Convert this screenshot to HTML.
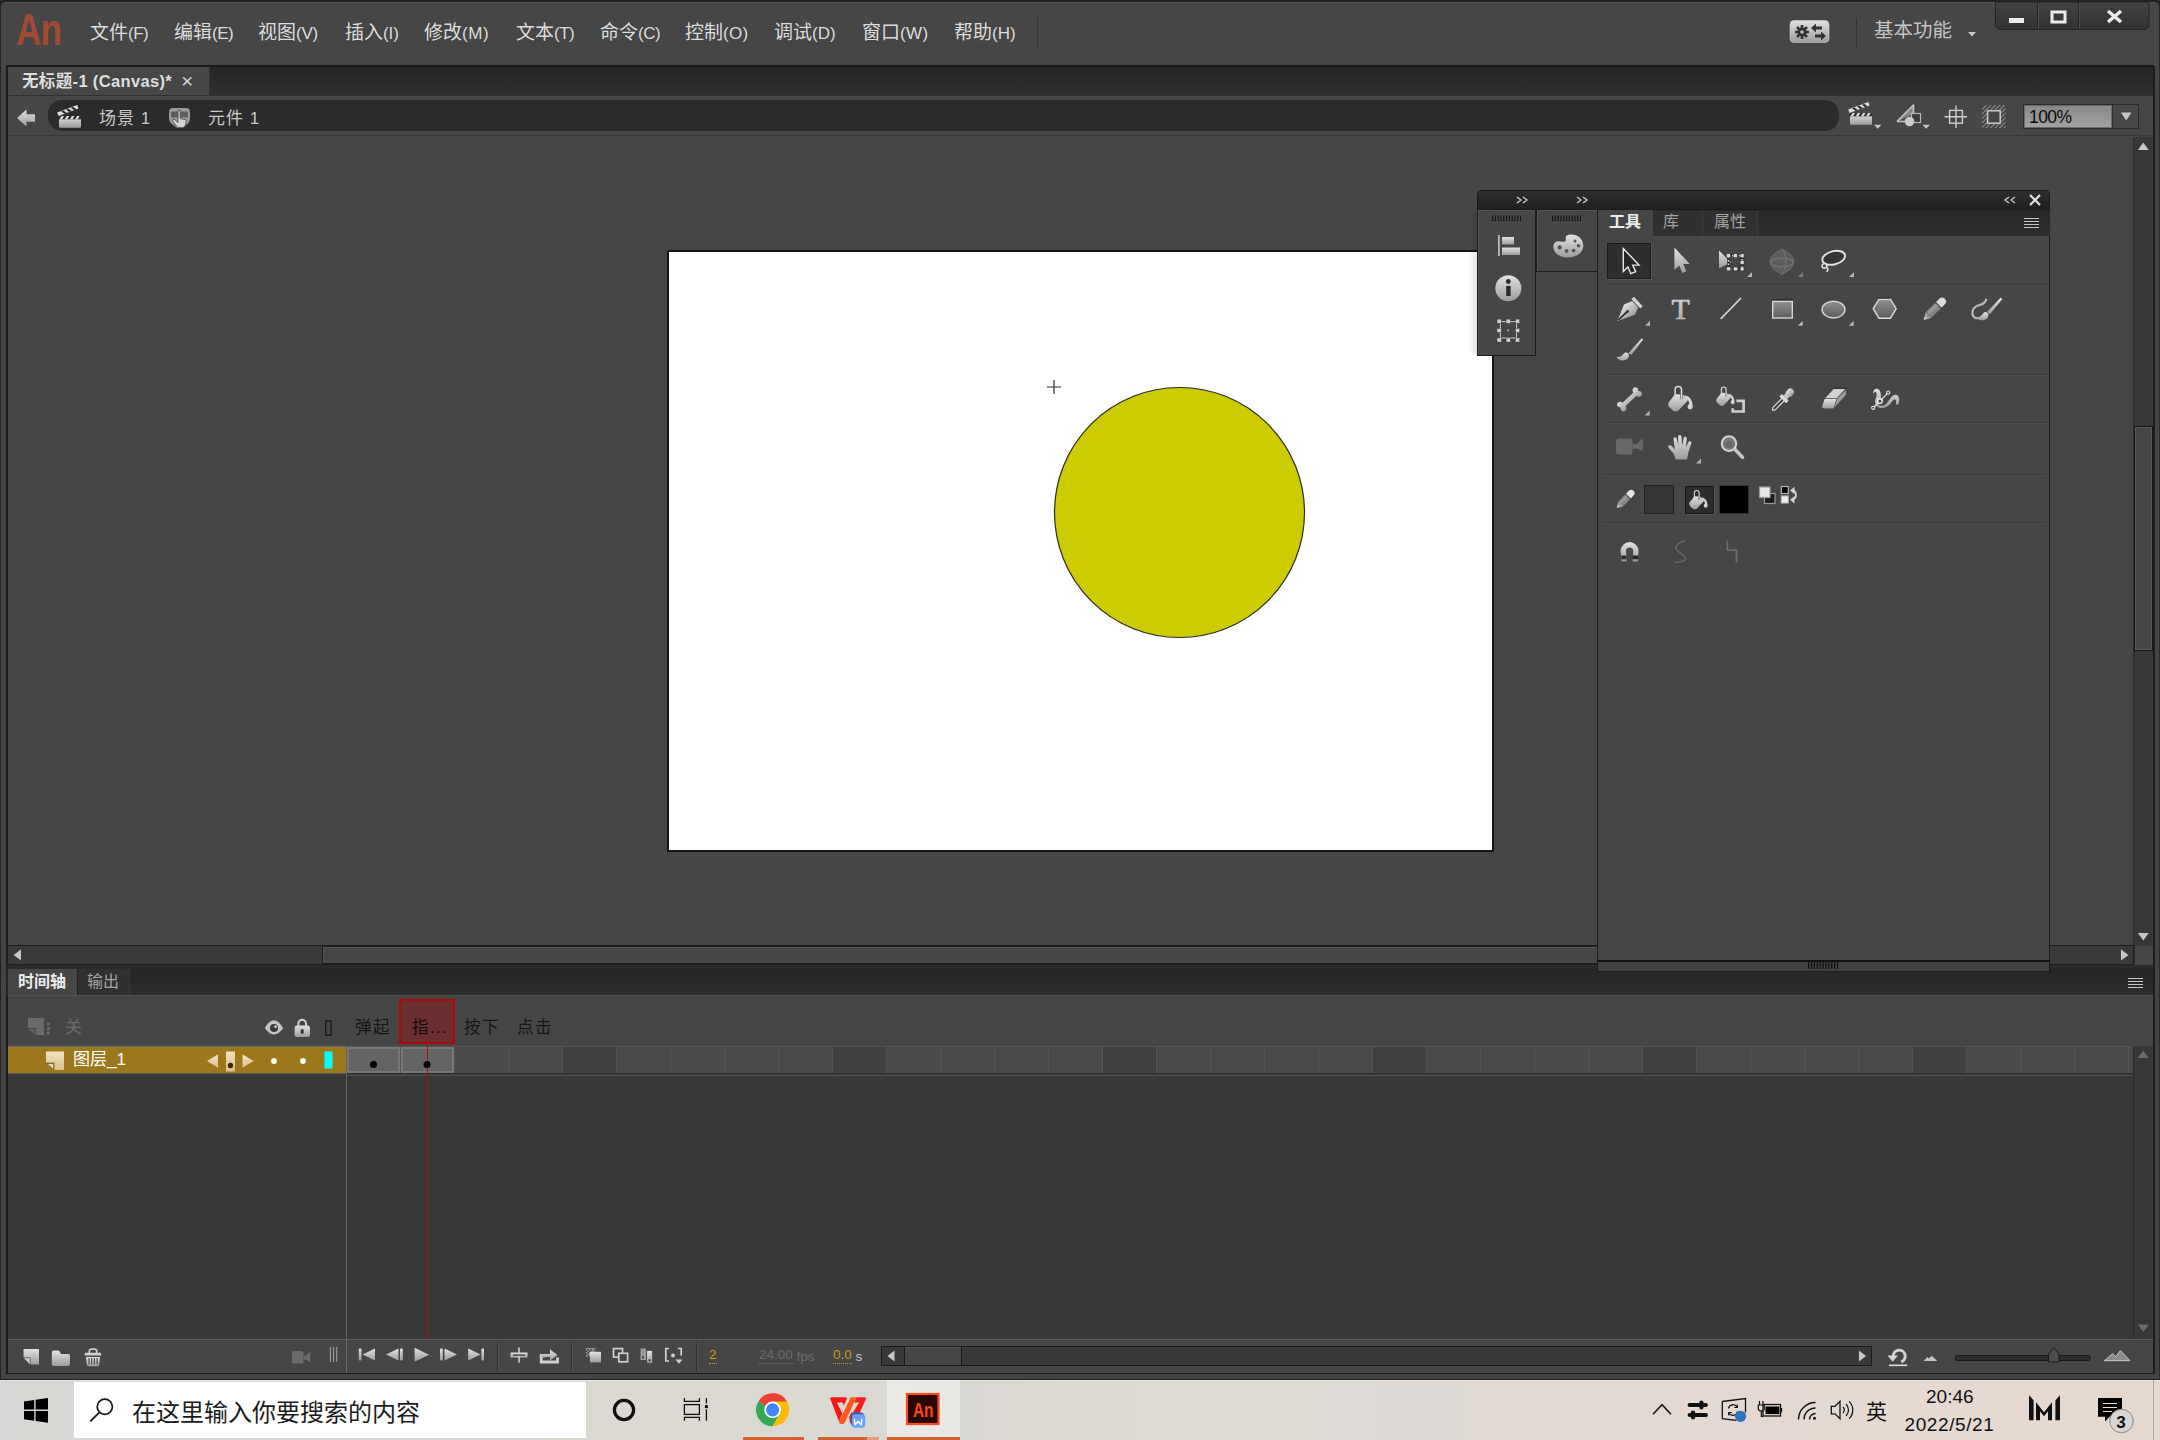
<!DOCTYPE html>
<html lang="zh-CN">
<head>
<meta charset="utf-8">
<title>Adobe Animate</title>
<style>
*{box-sizing:border-box;margin:0;padding:0}
html,body{width:2160px;height:1440px;overflow:hidden;background:#464646}
body{font-family:"Liberation Sans","Noto Sans CJK SC",sans-serif;color:#d6d6d6;position:relative}
.a{position:absolute}
.t{position:absolute;white-space:nowrap;line-height:1;z-index:5}
#ov{position:absolute;left:0;top:0;width:2160px;height:1440px;pointer-events:none}
.menu{font-size:19px;color:#dcdcdc;top:23px}
.menu small{font-size:17px;letter-spacing:-0.5px}
</style>
</head>
<body>
<!-- window frame -->
<div class="a" style="left:0;top:0;width:2160px;height:1380px;background:#434343;border-left:1px solid #222;border-right:1px solid #2a2a2a"></div>
<div class="a" style="left:0;top:0;width:2160px;height:67px;background:#222;border-radius:4px 4px 0 0"></div>
<div class="a" style="left:1px;top:2px;width:2158px;height:65px;background:#464646;border-radius:5px 5px 0 0;border-top:1px solid #565656"></div>
<!-- menu bar bottom line -->
<div class="a" style="left:6px;top:65px;width:2148px;height:2px;background:#1a1a1a"></div>
<!-- doc tab strip -->
<div class="a" style="left:7px;top:67px;width:2146px;height:28px;background:linear-gradient(#252525,#2f2f2f)"></div>
<div class="a" style="left:7px;top:67px;width:203px;height:29px;background:#474747;border-right:1px solid #333"></div>
<div class="a" style="left:7px;top:95px;width:2146px;height:1px;background:#303030"></div>
<!-- edit bar -->
<div class="a" style="left:7px;top:96px;width:2146px;height:39px;background:#464646"></div>
<div class="a" style="left:48px;top:100px;width:1791px;height:31px;background:#2b2b2b;border-radius:14px"></div>
<div class="a" style="left:7px;top:135px;width:2146px;height:1px;background:#383838"></div>
<!-- stage area -->
<div class="a" style="left:7px;top:136px;width:2127px;height:810px;background:#464646"></div>
<!-- left dark edge -->
<div class="a" style="left:6px;top:66px;width:2px;height:1309px;background:#1c1c1c"></div>
<div class="a" style="left:2153px;top:66px;width:2px;height:1309px;background:#1c1c1c"></div>
<!-- stage -->
<div class="a" style="left:667px;top:250px;width:827px;height:602px;background:#fff;border:2px solid #141414;border-radius:1px"></div>
<!-- stage v scrollbar -->
<div class="a" style="left:2133px;top:137px;width:20px;height:809px;background:#373737;border-left:1px solid #2a2a2a"></div>
<div class="a" style="left:2134px;top:426px;width:19px;height:225px;background:#464646;border:1px solid #161616;box-shadow:inset 0 0 0 1px #595959"></div>
<!-- stage h scrollbar -->
<div class="a" style="left:7px;top:945px;width:2127px;height:20px;background:#393939;border:1px solid #1e1e1e"></div>
<div class="a" style="left:322px;top:946px;width:1500px;height:18px;background:#464646;border:1px solid #1a1a1a;box-shadow:inset 0 1px 0 0 #5a5a5a, inset 1px 0 0 0 #555"></div>
<div class="a" style="left:2134px;top:946px;width:19px;height:19px;background:#464646;border-left:1px solid #2a2a2a"></div>
<!-- gap between stage and timeline -->
<div class="a" style="left:7px;top:965px;width:2146px;height:4px;background:#2a2a2a"></div>
<!-- timeline tab strip -->
<div class="a" style="left:7px;top:969px;width:2146px;height:26px;background:linear-gradient(#262626,#2d2d2d)"></div>
<div class="a" style="left:8px;top:969px;width:69px;height:27px;background:#464646"></div>
<div class="a" style="left:77px;top:969px;width:53px;height:26px;background:#303030;border-right:1px solid #3a3a3a;border-left:1px solid #222"></div>
<!-- timeline header -->
<div class="a" style="left:8px;top:995px;width:2145px;height:52px;background:#464646;border-top:1px solid #505050"></div>
<!-- timeline body -->
<div class="a" style="left:8px;top:1047px;width:2145px;height:293px;background:#383838"></div>
<!-- layer row -->
<div class="a" style="left:8px;top:1046px;width:338px;height:28px;background:#9c781c;border-top:1px solid #6a6a6a;border-bottom:1px solid #5a5a5a"></div>
<!-- frames row -->
<div class="a" id="frames" style="left:346px;top:1046px;width:1788px;height:28px;background:#555"></div>
<div class="a" style="left:347px;top:1047px;width:53px;height:26px;background:#646464;border:2px solid #777"></div>
<div class="a" style="left:401px;top:1047px;width:53px;height:26px;background:#646464;border:2px solid #777"></div>
<div class="a" style="left:455px;top:1047px;width:53px;height:26px;background:#4a4a4a"></div>
<div class="a" style="left:509px;top:1047px;width:53px;height:26px;background:#4a4a4a"></div>
<div class="a" style="left:563px;top:1047px;width:53px;height:26px;background:#404040"></div>
<div class="a" style="left:617px;top:1047px;width:53px;height:26px;background:#4a4a4a"></div>
<div class="a" style="left:671px;top:1047px;width:53px;height:26px;background:#4a4a4a"></div>
<div class="a" style="left:725px;top:1047px;width:53px;height:26px;background:#4a4a4a"></div>
<div class="a" style="left:779px;top:1047px;width:53px;height:26px;background:#4a4a4a"></div>
<div class="a" style="left:833px;top:1047px;width:53px;height:26px;background:#404040"></div>
<div class="a" style="left:887px;top:1047px;width:53px;height:26px;background:#4a4a4a"></div>
<div class="a" style="left:941px;top:1047px;width:53px;height:26px;background:#4a4a4a"></div>
<div class="a" style="left:995px;top:1047px;width:53px;height:26px;background:#4a4a4a"></div>
<div class="a" style="left:1049px;top:1047px;width:53px;height:26px;background:#4a4a4a"></div>
<div class="a" style="left:1103px;top:1047px;width:53px;height:26px;background:#404040"></div>
<div class="a" style="left:1157px;top:1047px;width:53px;height:26px;background:#4a4a4a"></div>
<div class="a" style="left:1211px;top:1047px;width:53px;height:26px;background:#4a4a4a"></div>
<div class="a" style="left:1265px;top:1047px;width:53px;height:26px;background:#4a4a4a"></div>
<div class="a" style="left:1319px;top:1047px;width:53px;height:26px;background:#4a4a4a"></div>
<div class="a" style="left:1373px;top:1047px;width:53px;height:26px;background:#404040"></div>
<div class="a" style="left:1427px;top:1047px;width:53px;height:26px;background:#4a4a4a"></div>
<div class="a" style="left:1481px;top:1047px;width:53px;height:26px;background:#4a4a4a"></div>
<div class="a" style="left:1535px;top:1047px;width:53px;height:26px;background:#4a4a4a"></div>
<div class="a" style="left:1589px;top:1047px;width:53px;height:26px;background:#4a4a4a"></div>
<div class="a" style="left:1643px;top:1047px;width:53px;height:26px;background:#404040"></div>
<div class="a" style="left:1697px;top:1047px;width:53px;height:26px;background:#4a4a4a"></div>
<div class="a" style="left:1751px;top:1047px;width:53px;height:26px;background:#4a4a4a"></div>
<div class="a" style="left:1805px;top:1047px;width:53px;height:26px;background:#4a4a4a"></div>
<div class="a" style="left:1859px;top:1047px;width:53px;height:26px;background:#4a4a4a"></div>
<div class="a" style="left:1913px;top:1047px;width:53px;height:26px;background:#404040"></div>
<div class="a" style="left:1967px;top:1047px;width:53px;height:26px;background:#4a4a4a"></div>
<div class="a" style="left:2021px;top:1047px;width:53px;height:26px;background:#4a4a4a"></div>
<div class="a" style="left:2075px;top:1047px;width:53px;height:26px;background:#4a4a4a"></div>
<div class="a" style="left:2129px;top:1047px;width:4px;height:26px;background:#4a4a4a"></div>
<div class="a" style="left:347px;top:1073px;width:1786px;height:1px;background:#2e2e2e"></div>
<div class="a" style="left:347px;top:1074px;width:1786px;height:1px;background:#3a3a3a"></div>
<div class="a" style="left:347px;top:1075px;width:1786px;height:1px;background:#505050"></div>
<!-- divider -->
<div class="a" style="left:346px;top:1047px;width:1px;height:326px;background:#686868;z-index:2"></div>
<!-- timeline v scroll -->
<div class="a" style="left:2133px;top:1046px;width:20px;height:294px;background:#373737;border-left:1px solid #2a2a2a"></div>
<!-- playhead -->
<div class="a" style="left:399px;top:999px;width:56px;height:45px;background:#6a3030;border:2px solid #b40808"></div>
<div class="a" style="left:427px;top:1044px;width:1px;height:295px;background:#b00c0c"></div>
<!-- bottom toolbar -->
<div class="a" style="left:8px;top:1339px;width:2145px;height:34px;background:#464646;border-top:1px solid #5c5c5c"></div>
<div class="a" style="left:0;top:1373px;width:2160px;height:7px;background:#444;border-bottom:1px solid #202020;border-left:1px solid #222;border-right:1px solid #2a2a2a"></div>
<div class="a" style="left:6px;top:1373px;width:2149px;height:1px;background:#181818"></div>
<!-- timeline h scroll -->
<div class="a" style="left:881px;top:1346px;width:991px;height:20px;background:#383838;border:1px solid #1a1a1a"></div>
<div class="a" style="left:904px;top:1346px;width:58px;height:20px;background:#464646;border:1px solid #1a1a1a;box-shadow:inset 0 1px 0 0 #5a5a5a"></div>
<!-- floating panel -->
<div class="a" style="left:1477px;top:190px;width:573px;height:20px;background:linear-gradient(#2e2e2e,#1f1f1f);border-radius:5px 5px 0 0;border:1px solid #1a1a1a;border-bottom:none"></div>
<div class="a" style="left:1469px;top:212px;width:8px;height:142px;background:linear-gradient(90deg,rgba(0,0,0,0),rgba(0,0,0,.1))"></div>
<!-- icon col 1 -->
<div class="a" style="left:1477px;top:209px;width:59px;height:147px;background:#464646;border:1px solid #1c1c1c;box-shadow:inset 1px 1px 0 0 #555"></div>
<!-- icon col 2 -->
<div class="a" style="left:1536px;top:209px;width:62px;height:63px;background:#464646;border:1px solid #1c1c1c;box-shadow:inset 1px 1px 0 0 #555"></div>
<!-- tool panel body -->
<div class="a" style="left:1597px;top:209px;width:453px;height:752px;background:#464646;border:1px solid #1c1c1c"></div>
<!-- tool panel tab strip -->
<div class="a" style="left:1598px;top:210px;width:452px;height:26px;background:linear-gradient(#282828,#2e2e2e)"></div>
<div class="a" style="left:1598px;top:210px;width:55px;height:27px;background:#464646"></div>
<div class="a" style="left:1653px;top:211px;width:50px;height:25px;background:#303030;border-right:1px solid #3c3c3c"></div>
<div class="a" style="left:1703px;top:211px;width:55px;height:25px;background:#303030;border-right:1px solid #3c3c3c"></div>
<!-- panel bottom grip -->
<div class="a" style="left:1597px;top:960px;width:453px;height:12px;background:#414141;border:1px solid #1c1c1c;border-top:2px solid #111"></div>
<!-- selected tool -->
<div class="a" style="left:1607px;top:243px;width:44px;height:36px;background:#2e2e2e;border:1px solid #1a1a1a;box-shadow:1px 1px 0 0 #585858"></div>
<!-- separators -->
<div class="a" style="left:1606px;top:284px;width:443px;height:2px;background:#3a3a3a;border-bottom:1px solid #505050"></div>
<div class="a" style="left:1606px;top:374px;width:443px;height:2px;background:#3a3a3a;border-bottom:1px solid #505050"></div>
<div class="a" style="left:1606px;top:422px;width:443px;height:2px;background:#3a3a3a;border-bottom:1px solid #505050"></div>
<div class="a" style="left:1603px;top:474px;width:443px;height:2px;background:#3a3a3a;border-bottom:1px solid #505050"></div>
<div class="a" style="left:1603px;top:522px;width:443px;height:2px;background:#3a3a3a;border-bottom:1px solid #505050"></div>
<!-- swatches -->
<div class="a" style="left:1644px;top:485px;width:30px;height:29px;background:#353535;border:1px solid #222"></div>
<div class="a" style="left:1685px;top:486px;width:29px;height:28px;background:#2c2c2c;border:1px solid #181818;box-shadow:1px 1px 0 0 #5a5a5a"></div>
<div class="a" style="left:1719px;top:485px;width:30px;height:29px;background:#000;border:1px solid #333"></div>
<!-- taskbar -->
<div class="a" style="left:0;top:1380px;width:2160px;height:60px;background:linear-gradient(90deg,#d7d7d5 0%,#dcd9d3 28%,#dad8d2 45%,#dddbd3 55%,#ded9d5 65%,#e3d9d3 76%,#e5d9d1 88%,#e5d8cf 100%)"></div>
<div class="a" style="left:0;top:1380px;width:2160px;height:1px;background:rgba(255,255,255,.35)"></div>
<div class="a" style="left:74px;top:1382px;width:512px;height:56px;background:#fff"></div>
<div class="a" style="left:887px;top:1380px;width:73px;height:60px;background:rgba(255,255,255,.45)"></div>
<div class="a" style="left:743px;top:1437px;width:61px;height:3px;background:#d0622e"></div>
<div class="a" style="left:818px;top:1437px;width:61px;height:3px;background:#d0622e"></div>
<div class="a" style="left:867px;top:1437px;width:12px;height:3px;background:#dfa080"></div>
<div class="a" style="left:887px;top:1437px;width:73px;height:3px;background:#d0622e"></div>
<div class="a" style="left:2153px;top:1380px;width:1px;height:60px;background:#a8a4a2"></div>
<!-- TEXT -->
<div class="t" id="logo" style="left:16px;top:8px;font-size:44px;font-weight:bold;color:#a04a32;letter-spacing:-1px;transform:scaleX(.8);transform-origin:0 0">An</div>
<div class="t menu" id="m1" style="left:90px">文件<small>(F)</small></div>
<div class="t menu" id="m2" style="left:174px">编辑<small>(E)</small></div>
<div class="t menu" id="m3" style="left:258px">视图<small style="letter-spacing:-0.30px">(V)</small></div>
<div class="t menu" id="m4" style="left:345px">插入<small style="letter-spacing:-0.08px">(I)</small></div>
<div class="t menu" id="m5" style="left:424px">修改<small style="letter-spacing:0.53px">(M)</small></div>
<div class="t menu" id="m6" style="left:516px">文本<small>(T)</small></div>
<div class="t menu" id="m7" style="left:600px">命令<small>(C)</small></div>
<div class="t menu" id="m8" style="left:685px">控制<small style="letter-spacing:0.27px">(O)</small></div>
<div class="t menu" id="m9" style="left:774px">调试<small style="letter-spacing:-0.03px">(D)</small></div>
<div class="t menu" id="m10" style="left:862px">窗口<small style="letter-spacing:0.33px">(W)</small></div>
<div class="t menu" id="m11" style="left:954px">帮助<small style="letter-spacing:-0.03px">(H)</small></div>
<div class="a" style="left:1037px;top:18px;width:1px;height:30px;background:#333"></div>
<div class="a" style="left:1856px;top:18px;width:1px;height:30px;background:#333"></div>
<div class="t" id="ws" style="left:1874px;top:21px;font-size:19.5px;color:#c4c4c4">基本功能</div>
<div class="t" id="doctab" style="left:22px;top:73px;font-size:16.5px;font-weight:bold;color:#dedede;letter-spacing:.35px">无标题-1 (Canvas)*</div>
<div class="t" id="tabx" style="left:181px;top:70px;font-size:21px;color:#d0d0d0">×</div>
<div class="t" id="sc1" style="left:99px;top:110px;font-size:17px;color:#c8c8c8;letter-spacing:1px">场景 1</div>
<div class="t" id="sc2" style="left:208px;top:110px;font-size:17px;color:#c8c8c8;letter-spacing:1px">元件 1</div>
<div class="t" id="zoom" style="left:2029px;top:108.5px;font-size:17.5px;color:#0c0c0c;letter-spacing:-0.6px">100%</div>
<!-- panel tabs -->
<div class="t" id="pt1" style="left:1609px;top:214px;font-size:16px;font-weight:bold;color:#ececec">工具</div>
<div class="t" id="pt2" style="left:1663px;top:214px;font-size:16px;color:#a4a4a4">库</div>
<div class="t" id="pt3" style="left:1714px;top:214px;font-size:16px;color:#a4a4a4">属性</div>
<!-- timeline tabs -->
<div class="t" id="tt1" style="left:18px;top:973.5px;font-size:16px;font-weight:bold;color:#ececec">时间轴</div>
<div class="t" id="tt2" style="left:87px;top:973.5px;font-size:16px;color:#a4a4a4">输出</div>
<div class="t" id="guan" style="left:65px;top:1019px;font-size:17px;color:#6c6c6c">关</div>
<div class="t" id="layer" style="left:73px;top:1051px;font-size:17px;color:#fff">图层_1</div>
<div class="t" id="h1" style="left:355px;top:1019px;font-size:16.5px;color:#151515;letter-spacing:1.5px">弹起</div>
<div class="t" id="h2" style="left:412px;top:1019px;font-size:16.5px;color:#180808;letter-spacing:1.5px">指...</div>
<div class="t" id="h3" style="left:464px;top:1019px;font-size:16.5px;color:#151515;letter-spacing:1.5px">按下</div>
<div class="t" id="h4" style="left:517px;top:1019px;font-size:16.5px;color:#151515;letter-spacing:1.5px">点击</div>
<!-- bottom toolbar text -->
<div class="t" id="b1" style="left:709px;top:1348px;font-size:13.5px;color:#c89a1e;border-bottom:1px dotted #c89a1e;padding-bottom:1px">2</div>
<div class="t" id="b2" style="left:759px;top:1348px;font-size:13.5px;color:#6a6a6a"><span style="border-bottom:1px dotted #6a6a6a;padding-bottom:1px">24.00</span> <span style="position:relative;top:1.5px">fps</span></div>
<div class="t" id="b3" style="left:833px;top:1348px;font-size:13.5px;color:#c8c8c8"><span style="color:#c89a1e;border-bottom:1px dotted #c89a1e;padding-bottom:1px">0.0</span> <span style="position:relative;top:1.5px">s</span></div>
<!-- taskbar text -->
<div class="t" id="search" style="left:132px;top:1400.5px;font-size:24px;color:#1c1c1c">在这里输入你要搜索的内容</div>
<div class="t" id="clk1" style="left:1926px;top:1387px;font-size:19px;color:#111">20:46</div>
<div class="t" id="clk2" style="left:1904.500px;top:1415px;font-size:19px;color:#111;letter-spacing:.6px">2022/5/21</div>
<div class="t" id="ime" style="left:1866px;top:1401px;font-size:21px;color:#111">英</div>
<svg id="ov" viewBox="0 0 2160 1440">
<defs>
<linearGradient id="g" x1="0" y1="0" x2="0" y2="1"><stop offset="0" stop-color="#e2e2e2"/><stop offset="1" stop-color="#9c9c9c"/></linearGradient>
<linearGradient id="gd" x1="0" y1="0" x2="0" y2="1"><stop offset="0" stop-color="#7c7c7c"/><stop offset="1" stop-color="#5c5c5c"/></linearGradient>
<linearGradient id="gy" x1="0" y1="0" x2="0" y2="1"><stop offset="0" stop-color="#f0e2c4"/><stop offset="1" stop-color="#d8c08c"/></linearGradient>
<linearGradient id="gb" x1="0" y1="0" x2="0" y2="1"><stop offset="0" stop-color="#424242"/><stop offset="1" stop-color="#323232"/></linearGradient>
<linearGradient id="gz" x1="0" y1="0" x2="0" y2="1"><stop offset="0" stop-color="#888"/><stop offset="1" stop-color="#a2a2a2"/></linearGradient>
</defs>
<!-- window buttons -->
<path d="M1995.5 2V24.5a5 5 0 0 0 5 5H2144a5 5 0 0 0 5-5V2z" fill="url(#gb)" stroke="#242424"/>
<path d="M2037.5 2V29.5M2078.5 2V29.5" stroke="#262626" stroke-width="1"/>
<path d="M2038.5 3V29M2079.5 3V29" stroke="#4a4a4a" stroke-width="1"/>
<rect x="2009" y="18" width="15" height="5" fill="#ececec"/>
<rect x="2052" y="12" width="13" height="10" fill="none" stroke="#ececec" stroke-width="3"/>
<path d="M2108 11L2121 22M2121 11L2108 22" stroke="#ececec" stroke-width="3.4"/>
<!-- sync icon -->
<rect x="1790" y="20.5" width="39" height="22" rx="4" fill="url(#g)" stroke="#d0d0d0" stroke-width="0.6"/>
<g fill="#333">
<circle cx="1802" cy="32" r="4.6"/>
<g stroke="#333" stroke-width="2.6"><path d="M1802 25v14M1795 32h14M1797 27l10 10M1807 27l-10 10"/></g>
<circle cx="1802" cy="32" r="1.8" fill="#b8b8b8"/>
<path d="M1811 28l5-4.5v3h6v3h-6v3z"/>
<path d="M1826 36l-5-4.5v3h-6v3h6v3z"/>
</g>
<path d="M1968 32h8l-4 4.5z" fill="#c8c8c8"/>
<!-- edit bar: back arrow -->
<path d="M17 118l9.5-8.5v4.7h8.5v7.6h-8.5v4.7z" fill="url(#g)"/>
<!-- clapper (left) -->
<g id="clap">
<rect x="59" y="116" width="22" height="11.8" rx="1.2" fill="url(#g)"/>
<rect x="59" y="116" width="22" height="3.3" fill="#2b2b2b"/>
<path d="M61.5 116l-2 3.3h2.6l2-3.3zM66.7 116l-2 3.3h2.6l2-3.3zM71.9 116l-2 3.3h2.6l2-3.3zM77.1 116l-2 3.3h2.6l2-3.3z" fill="#dcdcdc"/>
<g transform="rotate(-20.5 58.8 116.2)">
<rect x="58.6" y="112.2" width="21.4" height="3.8" fill="#e0e0e0"/>
<path d="M62.6 112.6l2.4 3.4h2.6l-2.4-3.4zM67.8 112.6l2.4 3.4h2.6l-2.4-3.4zM73 112.6l2.4 3.4h2.6l-2.4-3.4z" fill="#2b2b2b"/>
</g>
</g>
<!-- symbol (button) icon -->
<path d="M169 112q0-4 4-4h13q4 0 4 4v6q0 5-4 7l-3 3h-6l-5-4q-3-2-3-6z" fill="#9a9a9a"/>
<path d="M172 111.5h15q1 0 1 1v5h-17v-5q0-1 1-1z" fill="#5e5e5e"/>
<path d="M178 110.5h2.2v8l5 1.2q1.5.5 1 2.5l-1 3.5q-.5 1.8-2.5 1.8h-4q-1.5 0-2.5-1.5l-3.5-5q-.8-1.5 1-1.5 1.2 0 2 1l2.3 2z" fill="#d2d2d2" stroke="#333" stroke-width=".7"/>
<!-- edit bar right: clapper -->
<use href="#clap" x="1791" y="-3"/>
<path d="M1874 124.7h7.4l-3.7 4z" fill="#c8c8c8"/>
<!-- edit symbols icon -->
<path d="M1897 121.5L1913.5 105v8.5" fill="#888" stroke="#c4c4c4" stroke-width="1.6" stroke-linejoin="round"/>
<path d="M1897 121.5h10" stroke="#c4c4c4" stroke-width="1.6"/>
<rect x="1911.5" y="113.5" width="9" height="9" fill="#3c3c3c" stroke="#b8b8b8" stroke-width="1.2"/>
<circle cx="1909.5" cy="121.5" r="4.8" fill="#cacaca"/>
<path d="M1922.5 124.7h7.4l-3.7 4z" fill="#c8c8c8"/>
<!-- center stage -->
<g stroke="#cccccc" stroke-width="1.4" fill="none"><path d="M1956 105.5v22.5M1944.6 116.8h22.4"/><rect x="1949.6" y="110.4" width="12.8" height="12.8"/></g>
<!-- clip icon -->
<clipPath id="ring"><path clip-rule="evenodd" d="M1982 105h23.5v23h-23.5zM1987 110h13.5v13.5h-13.5z"/></clipPath>
<g clip-path="url(#ring)" stroke="#8c8c8c" stroke-width="1.1">
<path d="M1976 111l8-8M1976 115.5l12.5-12.5M1976 120l17-17M1976 124.5l21.5-21.5M1976 129l26-26M1980.5 129l26-26M1985 129l26-26M1989.5 129l22-22M1994 129l18-18M1998.5 129l13-13M2003 129l9-9M1976 133.5l30-30"/>
</g>
<rect x="1987.6" y="110.8" width="12.6" height="12.4" fill="none" stroke="#cccccc" stroke-width="1.5"/>
<!-- zoom combo -->
<rect x="2023.5" y="104.5" width="115" height="24" fill="#484848" stroke="#2a2a2a"/>
<rect x="2024.5" y="105.5" width="87" height="22" fill="url(#gz)" stroke="#6a6a6a"/>
<path d="M2112.5 105v23" stroke="#2e2e2e"/>
<path d="M2121 112.5h10.5l-5.25 8z" fill="#c8c8c8"/>
</svg>
<svg id="ov2" style="position:absolute;left:0;top:0;width:2160px;height:1440px" viewBox="0 0 2160 1440">
<defs>
<path id="sub" d="M0 0v-5l-5 5z" fill="#b4b4b4"/>
<linearGradient id="gs" x1="0" y1="0" x2="0" y2="1"><stop offset="0" stop-color="#909090"/><stop offset="1" stop-color="#5c5c5c"/></linearGradient>
</defs>
<!-- panel title bar glyphs -->
<g stroke="#d0d0d0" stroke-width="1.3" fill="none">
<path d="M1517 197l4 3-4 3M1523 197l4 3-4 3"/>
<path d="M1577 197l4 3-4 3M1583 197l4 3-4 3"/>
<path d="M2009 197l-4 3 4 3M2015 197l-4 3 4 3"/>
</g>
<path d="M2030 195l10 10M2040 195l-10 10" stroke="#e4e4e4" stroke-width="2.2"/>
<!-- panel menu icon -->
<path d="M2024 218.5h15M2024 221.5h15M2024 224.5h15M2024 227.5h15" stroke="#c4c4c4" stroke-width="1.2"/>
<!-- grips -->
<path d="M1492 218.5h29M1552 218.5h29" stroke="#161616" stroke-width="6" stroke-dasharray="1.2 1.6"/>
<path d="M1492 222.5h29M1552 222.5h29" stroke="#5a5a5a" stroke-width="1" stroke-dasharray="1.2 1.6"/>
<path d="M1808 965.5h30" stroke="#101010" stroke-width="7" stroke-dasharray="1.2 1.7"/>
<!-- align icon -->
<rect x="1498" y="235" width="1.8" height="21" fill="#b8b8b8"/>
<rect x="1502" y="237" width="12" height="7.5" fill="url(#g)"/>
<rect x="1502" y="247.5" width="18" height="7.5" fill="url(#g)"/>
<!-- info icon -->
<circle cx="1508.3" cy="288.3" r="13" fill="url(#g)"/>
<circle cx="1508.3" cy="281.5" r="2.4" fill="#2a2a2a"/>
<rect x="1506.2" y="286" width="4.4" height="10" fill="#2a2a2a"/>
<!-- transform icon -->
<rect x="1500.4" y="321.6" width="16.1" height="16.4" fill="none" stroke="#2c2c2c" stroke-width="2.6"/>
<rect x="1500.4" y="321.6" width="16.1" height="16.4" fill="none" stroke="#c6c6c6" stroke-width="1.3"/>
<g fill="#d0d0d0" stroke="#3a3a3a" stroke-width=".5">
<rect x="1497" y="319.1" width="4.4" height="4.2"/>
<rect x="1497" y="328.3" width="4.4" height="4.2"/>
<rect x="1497" y="337.9" width="4.4" height="4.2"/>
<rect x="1506.1" y="319.1" width="4.4" height="4.2"/>
<rect x="1506.1" y="337.9" width="4.4" height="4.2"/>
<rect x="1515.3" y="319.1" width="4.4" height="4.2"/>
<rect x="1515.3" y="328.3" width="4.4" height="4.2"/>
<rect x="1515.3" y="337.9" width="4.4" height="4.2"/>
</g>
<rect x="1507.5" y="329.6" width="1.5" height="1.5" fill="#d8d8d8"/>
<!-- palette icon -->
<path d="M1553.4 246.7C1553.4 243.5 1555.5 241.3 1558.5 241.3C1561 241.3 1563 242.5 1565 241.3C1566.8 240 1565 238 1566 236.3C1567 234.8 1569 234.4 1571 234.4C1578 234.4 1583.3 239 1583.3 245.4C1583.3 252.5 1576.5 257.5 1567.7 257.5C1559.5 257.5 1553.4 253 1553.4 246.7Z" fill="url(#g)"/>
<g fill="#555"><circle cx="1559.7" cy="247.4" r="2.1"/><circle cx="1566.6" cy="250.9" r="1.9"/><circle cx="1573.6" cy="250.6" r="1.9"/><circle cx="1578.5" cy="245.8" r="1.8"/><circle cx="1575" cy="241" r="1.5"/></g>
<!-- ROW 1 -->
<path d="M1623.3 248.5v23l4.6-4.6 3 6.8 4.8-2-3-6.6h6.3z" fill="#262626" stroke="#e6e6e6" stroke-width="1.4" stroke-linejoin="miter"/>
<path d="M1674.4 247.6v22.5l4.8-4.6 3.2 7.5 4-1.7-3.2-7.4h6.6z" fill="url(#g)"/>
<path d="M1719 250.5v17.7l12.2-5.6z" fill="url(#g)"/>
<rect x="1728.5" y="255.7" width="13.6" height="13.2" fill="none" stroke="#222" stroke-width="2.6"/>
<rect x="1728.5" y="255.7" width="13.6" height="13.2" fill="none" stroke="#dcdcdc" stroke-width="1.5" stroke-dasharray="1.7 1.7"/>
<g fill="#dedede" stroke="#2a2a2a" stroke-width=".5">
<rect x="1726.6" y="253.8" width="3.8" height="3.8"/><rect x="1733.4" y="253.8" width="3.8" height="3.8"/><rect x="1740.2" y="253.8" width="3.8" height="3.8"/>
<rect x="1740.2" y="260.4" width="3.8" height="3.8"/>
<rect x="1726.6" y="267" width="3.8" height="3.8"/><rect x="1733.4" y="267" width="3.8" height="3.8"/><rect x="1740.2" y="267" width="3.8" height="3.8"/>
</g>
<use href="#sub" x="1752" y="277"/>
<!-- 3d rotation (disabled) -->
<g fill="none" stroke="#707070" stroke-width="1.4">
<path d="M1782 249.3c5 2.4 11.6 6.5 11.6 12.5s-6.6 10-11.6 12.5c-5-2.5-11.6-6.5-11.6-12.5s6.6-10.1 11.6-12.5z" fill="#5c5c5c" stroke="#666"/>
<ellipse cx="1782" cy="262.5" rx="11.4" ry="4.2"/>
<path d="M1782 249.5c5 4 5 21 0 24.6"/>
</g>
<use href="#sub" x="1803" y="277" opacity=".5"/>
<!-- lasso -->
<ellipse cx="1833.7" cy="257.8" rx="11.6" ry="6.6" transform="rotate(-14 1833.7 257.8)" fill="#363636" stroke="#e2e2e2" stroke-width="1.9"/>
<path d="M1824 263.5c-2.5 1-2.8 4.2 0 4.6 2.4.3 3.6-2 2.4-3.6M1826 266.5c2 1.5 3 3.6.5 5.5" fill="none" stroke="#e2e2e2" stroke-width="1.5"/>
<use href="#sub" x="1854" y="277"/>
<!-- ROW 2 -->
<!-- pen -->
<g transform="translate(1617.3 320.9) rotate(-42.8)">
<path d="M0 0L16 -7.4L24.4 -4.4V4.4L17 7.5Z" fill="url(#g)"/>
<path d="M1.5 0H13.5" stroke="#333" stroke-width="1.8"/>
<circle cx="14" cy="0" r="1.4" fill="#333"/>
<rect x="25.3" y="-6.5" width="3.3" height="13" fill="#d4d4d4"/>
</g>
<use href="#sub" x="1650" y="325.8"/>
<text x="1671.4" y="318.7" font-family="Liberation Serif, serif" font-size="29.6" fill="url(#g)" stroke="#c6c6c6" stroke-width=".7" textLength="18.2" lengthAdjust="spacingAndGlyphs">T</text>
<path d="M1720.7 318.8L1741 298" stroke="#d4d4d4" stroke-width="1.7"/>
<rect x="1772.7" y="301.4" width="19.6" height="16.6" fill="url(#gs)" stroke="#d6d6d6" stroke-width="1.4"/>
<path d="M1772 299.7h21" stroke="#2c2c2c" stroke-width="1.2"/>
<use href="#sub" x="1802.7" y="325.8"/>
<ellipse cx="1833.5" cy="309.6" rx="11.5" ry="8.4" fill="url(#gs)" stroke="#d6d6d6" stroke-width="1.4"/>
<use href="#sub" x="1853.7" y="325.8"/>
<path d="M1873.2 308.7l5.8-9.4h11.4l5.8 9.4-5.8 9.5h-11.4z" fill="url(#gs)" stroke="#d8d8d8" stroke-width="1.4"/>
<path d="M1878.5 298h12" stroke="#2c2c2c" stroke-width="1.2"/>
<!-- pencil -->
<g transform="translate(1923.6 319.9) rotate(-44.8)">
<path d="M0 0l7-3.8v7.6z" fill="#d0d0d0"/>
<path d="M3.8-2l3.2-1.8v7.6l-3.2-1.8z" fill="#9a9a9a"/>
<rect x="7.6" y="-3.9" width="12.6" height="7.8" fill="#888"/>
<path d="M7.6-1.4h12.6" stroke="#9c9c9c" stroke-width="2.4"/>
<path d="M21.4-3.9h4.6a3.9 3.9 0 0 1 0 7.8h-4.6z" fill="#dcdcdc"/>
</g>
<!-- art brush -->
<path d="M1986.5 298.8c-1 4-3 5.2-6.5 6-5 1.2-8 4.5-7.6 8.5.3 3 2 4.6 4.5 5" fill="none" stroke="#b8b8b8" stroke-width="2.3"/>
<path d="M2000.6 297.5l1.8 1.5-12.5 15.2-2.8-2.3z" fill="url(#g)"/>
<path d="M1975 317c4 .5 6.5-.8 8-3.6 1.2-1.3 2.8-1.8 4.2-.6 1.5 1.3 1.6 3 .6 4.6-2.2 3.4-8.3 4.4-12.8-.4z" fill="url(#g)"/>
<!-- brush (row 2b) -->
<path d="M1641.8 338.3l1.4 1.1-12 15.7-2.6-2z" fill="url(#g)"/>
<path d="M1616.2 357c3.5.3 5.8-.6 7.2-3 1.1-1.6 2.8-2.1 4.3-1 1.5 1.2 1.7 3 .8 4.6-2.2 3.9-8.5 4.3-12.3-.6z" fill="url(#g)"/>
<!-- ROW 3 -->
<!-- bone -->
<g transform="translate(1629.5 399.3) rotate(-43)">
<path d="M-7.5-2.2h15c0-3.8 5.2-4.4 5.9-1 .2 1.3-.4 2.4-1.4 3.2 1 .8 1.6 1.9 1.4 3.2-.7 3.4-5.9 2.8-5.9-1h-15c0 3.8-5.2 4.4-5.9 1-.2-1.3.4-2.4 1.4-3.2-1-.8-1.6-1.9-1.4-3.2.7-3.4 5.9-2.8 5.9 1z" fill="url(#g)"/>
</g>
<use href="#sub" x="1649.7" y="415.4"/>
<!-- paint bucket -->
<g id="bucket">
<path d="M1684 395.3C1688 395.5 1691.5 398.5 1692.3 403C1692.8 405.5 1692.9 407.3 1692.3 408.3C1691.3 410 1688.3 409.6 1687.7 407.5C1687.3 406 1688.3 404.5 1689.3 403.8C1689 401.5 1688.3 400.5 1687 399.6Z" fill="#d4d4d4"/>
<path d="M1674 395.6L1668.6 402.4Q1667.6 404.4 1669.2 407L1673.2 410.8Q1675.8 412.4 1678.4 410.6L1687.8 400.8L1686.4 398L1682.4 394.4L1675 394.2Z" fill="url(#g)"/>
<path d="M1681.5 394v5.2" stroke="#555" stroke-width="2.8"/>
<path d="M1675.1 396.8v-7.2a3.2 3.2 0 0 1 6.4 0v9.7" fill="none" stroke="#dedede" stroke-width="1.5"/>
</g>
<!-- ink bottle -->
<g transform="translate(465 97.2) scale(.75)"><use href="#bucket"/></g>
<path d="M1736.4 400.8H1743.6V411.5H1732.7V408.2" fill="none" stroke="#cdcdcd" stroke-width="2.7"/>
<!-- eyedropper -->
<g transform="translate(1772.6 410.2) rotate(-45.5)">
<path d="M0 0l2-1.6h13.5v3.2h-13.5z" fill="#3a3a3a" stroke="#d2d2d2" stroke-width="1.3"/>
<rect x="14.5" y="-4.8" width="3.6" height="9.6" rx=".8" fill="#dadada"/>
<rect x="18.1" y="-2.6" width="3.6" height="5.2" fill="#cacaca"/>
<rect x="20.5" y="-3.6" width="8.4" height="7.2" rx="3.4" fill="url(#g)"/>
</g>
<!-- eraser -->
<path d="M1834 388.8h11.4l-8.8 9.5h-11.6z" fill="#d2d2d2"/>
<path d="M1824.6 399h11.8l-2.8 9.5h-9.2q-2.6-.3-2.2-2.4z" fill="url(#g)"/>
<path d="M1837.2 398.6l8.8-8.6-.2 5-11.4 12.4z" fill="#9c9c9c"/>
<path d="M1833.5 388.3h12" stroke="#222" stroke-width="1"/>
<!-- width tool -->
<path d="M1873.4 393.6c-.6-3 1.3-5 3.6-4.8 2.6.3 3.8 3.3 4 6.6.2 3.2-1.8 5.3-3.4 8.3 1.6 2.2 4.8 2.6 7.2 1.2 3.4-2 4.8-6.5 8-9.2 2.3-1.7 5-1.4 6 1.5.8 2.3.5 4.7-.4 7.2h-2.4c.3-2.6.3-4.6-1.2-5-1.6-.3-3 2.6-5.4 5.4-2.6 2.8-7.4 4.3-11.2 2.4-3.6-1.8-3.8-6.4-2.2-9.8 1-2.2.8-4.8-.4-5.6-1-.4-1.6.4-1.4 1.8z" fill="url(#g)"/>
<path d="M1873.3 407.8l6.6-6.7 8.3-8.5" stroke="#ececec" stroke-width="1.3"/>
<circle cx="1879.9" cy="401.1" r="2.3" fill="#444" stroke="#f2f2f2" stroke-width="1.5"/>
<circle cx="1873.2" cy="407.8" r="1.6" fill="#444" stroke="#ececec" stroke-width="1.1"/>
<circle cx="1888.2" cy="392.6" r="1.6" fill="#444" stroke="#ececec" stroke-width="1.1"/>
<!-- ROW 4 -->
<rect x="1616" y="438.5" width="16.5" height="16" rx="2.5" fill="#686868"/>
<path d="M1632.5 443.6l3.5 1 6.9-6.4v12.6l-6.9-2.3-3.5.6z" fill="#686868"/>
<!-- hand -->
<path d="M1675.5 459.5l-1.6-5.6-5.6-6.4q-.8-1.8 1-2.3 1.5-.2 2.7 1.1l2.9 3.3-1.5-10.6q0-1.7 1.5-1.8 1.5 0 1.9 1.6l1.5 7.3-.2-9.6q.1-1.6 1.7-1.6t1.7 1.6l.6 9.5 1.5-8q.4-1.5 1.8-1.3 1.5.3 1.4 1.9l-.8 8.7 2.5-5.3q.7-1.3 2-.8 1.3.6.9 2.1l-3.1 9.3-1.3 6.9z" fill="url(#g)"/>
<use href="#sub" x="1701" y="463.4"/>
<!-- magnifier -->
<path d="M1735 449.5l7.5 7.7" stroke="#c4c4c4" stroke-width="3.6" stroke-linecap="round"/>
<circle cx="1729" cy="443.6" r="7.3" fill="#7a7a7a" stroke="#d4d4d4" stroke-width="2"/>
<ellipse cx="1729" cy="444.5" rx="4.5" ry="3.6" fill="#6a6a6a"/>
<!-- ROW 5 -->
<g transform="translate(1616.7 508) rotate(-45.7) scale(.86)">
<path d="M0 0l7-3.8v7.6z" fill="#d0d0d0"/>
<path d="M3.8-2l3.2-1.8v7.6l-3.2-1.8z" fill="#9a9a9a"/>
<rect x="7.6" y="-3.9" width="10.6" height="7.8" fill="#888"/>
<path d="M7.6-1.4h10.6" stroke="#9c9c9c" stroke-width="2.4"/>
<path d="M19.4-3.9h4.6a3.9 3.9 0 0 1 0 7.8h-4.6z" fill="#e4e4e4"/>
</g>
<g transform="translate(438 200.7) scale(.75)"><use href="#bucket"/></g>
<!-- default colors -->
<rect x="1764.5" y="493.5" width="10.5" height="10" fill="#1c1c1c" stroke="#9a9a9a" stroke-width="1.2"/>
<rect x="1759.5" y="487" width="10.5" height="10.5" fill="#e6e6e6" stroke="#9a9a9a" stroke-width="1.2"/>
<!-- swap colors -->
<rect x="1781.3" y="486.5" width="7" height="7" fill="#050505" stroke="#b4b4b4" stroke-width="1.2"/>
<rect x="1781.3" y="496" width="7" height="7" fill="#f2f2f2" stroke="#b4b4b4" stroke-width="1.2"/>
<path d="M1792 490.5c5 0 5.5 8.5 0 9" fill="none" stroke="#d0d0d0" stroke-width="1.8"/>
<path d="M1790 490.5l4.5-3.8v7.6zM1790 499.7l4.5-3.8v7.6z" fill="#d0d0d0"/>
<!-- ROW 6 -->
<path d="M1621.7 561.5L1620.6 551A9 9 0 0 1 1638.6 551L1637.8 561.5L1632.8 561.5L1633.2 551A3.6 3.6 0 0 0 1626 551L1626.7 561.5Z" fill="url(#g)"/>
<path d="M1621.1 555.4h5.2l.2 3.9h-5zM1633 555.4h5.2l-.3 3.9h-5z" fill="#2a2a2a"/>
<path d="M1685 541c-7 1.5-10.5 5-8.5 8.5s10 6 9 9.5c-1 2.5-6 3.3-11 3.5" fill="none" stroke="#6a6a6a" stroke-width="1.5"/>
<path d="M1727.3 540.4v9.8h9.2v12.6" fill="none" stroke="#6a6a6a" stroke-width="1.8"/>
</svg>
<svg id="ov3" style="position:absolute;left:0;top:0;width:2160px;height:1440px" viewBox="0 0 2160 1440">
<!-- stage scroll arrows -->
<path d="M2143.3 142.5l5.4 7.5h-10.8z" fill="#c8c8c8"/>
<path d="M2143.3 940.5l5.4-7.5h-10.8z" fill="#c8c8c8"/>
<path d="M13.5 955l7.5-5.4v10.8z" fill="#c8c8c8"/>
<path d="M2128.5 955l-7.5-5.4v10.8z" fill="#c8c8c8"/>
<!-- timeline v scroll arrows -->
<path d="M2143.3 1050.5l5.4 7.5h-10.8z" fill="#6c6c6c"/>
<path d="M2143.3 1332l5.4-7.5h-10.8z" fill="#6c6c6c"/>
<!-- timeline menu -->
<path d="M2128 978.5h15M2128 981.5h15M2128 984.5h15M2128 987.5h15" stroke="#c4c4c4" stroke-width="1.2"/>
<!-- stage content -->
<circle cx="1179.5" cy="512.5" r="125" fill="#cccc00" stroke="#2a2a2a" stroke-width="1.2"/>
<path d="M1054 380v14M1047 387h14" stroke="#2a2a2a" stroke-width="1.2"/>
<!-- timeline header icons -->
<path d="M28 1018h16v17h-8v-7h-8z" fill="#6a6a6a"/>
<path d="M28.5 1029h6.5v6z" fill="#606060"/>
<g fill="#686868"><rect x="47" y="1022.5" width="3" height="3"/><rect x="47" y="1027" width="3" height="3"/><rect x="47" y="1031.5" width="3" height="3"/></g>
<!-- eye -->
<path d="M264.8 1028q9.2-15.4 18.3.3-9.1 12.6-18.3-.3z" fill="#c4c4c4"/>
<circle cx="274" cy="1028.1" r="4" fill="#383838"/>
<circle cx="275.5" cy="1026.7" r="1.4" fill="#c8c8c8"/>
<!-- lock -->
<path d="M298.4 1026.5v-3a3.8 3.8 0 0 1 7.6 0v3" fill="none" stroke="#d4d4d4" stroke-width="1.9"/>
<rect x="294.6" y="1025.4" width="15.4" height="11.6" rx="2.5" fill="url(#g)"/>
<rect x="300.8" y="1029.2" width="2.8" height="4.6" rx=".8" fill="#2e2e2e"/>
<!-- outline box -->
<rect x="325.7" y="1021" width="5.4" height="14.2" fill="none" stroke="#161616" stroke-width="1.3"/>
<!-- layer row icons -->
<path d="M46 1051.5h18v18.5h-9.5v-7.5h-8.5z" fill="url(#gy)"/>
<path d="M46.8 1063.5h6.8v6.3z" fill="#e8d8b4" stroke="#5a4614" stroke-width=".6"/>
<path d="M207 1061l11-6.8v13.6z" fill="url(#gy)"/>
<path d="M253.5 1061l-11-6.8v13.6z" fill="url(#gy)"/>
<rect x="226" y="1051.5" width="9" height="20" fill="url(#gy)"/>
<circle cx="230.5" cy="1065.5" r="2.7" fill="#3a2a10"/>
<circle cx="274" cy="1061" r="2.9" fill="#fff"/>
<circle cx="303" cy="1061" r="2.9" fill="#fff"/>
<rect x="324.5" y="1051.5" width="8" height="17" fill="#00ffff"/>
<!-- keyframes -->
<circle cx="373.5" cy="1064.5" r="3.5" fill="#000"/>
<circle cx="427" cy="1064.5" r="3.5" fill="#000"/>
<!-- bottom toolbar left -->
<path d="M23.5 1349h15.5v15.5h-8.5v-7h-7z" fill="url(#g)"/>
<path d="M24 1358.3h5.8v6z" fill="#d0d0d0"/>
<path d="M51.8 1352.6q0-2 2-2h3.8q1.4 0 2.2 1.2l1.2 2.2h7q2 0 2 2v8q0 2-2 2h-14.2q-2 0-2-2z" fill="url(#g)"/>
<g>
<path d="M89.3 1353v-1.5q0-2.3 2.3-2.3h2.8q2.3 0 2.3 2.3v1.5" fill="none" stroke="#cfcfcf" stroke-width="1.7"/>
<rect x="84.6" y="1352.8" width="16.6" height="2.8" rx="1.2" fill="#d2d2d2"/>
<path d="M86 1357h14l-.8 7.6q-.2 1.6-1.8 1.6h-8.8q-1.6 0-1.8-1.6z" fill="url(#g)"/>
<path d="M89 1358v6.6M91.7 1358v6.6M94.4 1358v6.6M97.1 1358v6.6" stroke="#464646" stroke-width="1.1"/>
</g>
<!-- camera disabled -->
<rect x="292" y="1351" width="11.5" height="12.5" rx="1.8" fill="#6a6a6a"/>
<path d="M303.5 1355l2.3.8 4.4-4.2v10.8l-4.4-3-2.3.6z" fill="#6a6a6a"/>
<path d="M330.5 1347v15M333.6 1347v15M336.7 1347v15" stroke="#9c9c9c" stroke-width="1.1"/>
<!-- playback -->
<g fill="url(#g)">
<rect x="358.8" y="1348.6" width="2.6" height="11.8"/><path d="M362.6 1354.5l12.4-6v12z"/>
<path d="M386 1354.5l12.5-6v12z"/><rect x="400" y="1348.6" width="2.8" height="11.8"/>
<path d="M414.6 1347.7l14.4 7-14.4 7z"/>
<rect x="440" y="1348.6" width="2.8" height="11.8"/><path d="M457 1354.5l-12.5-6v12z"/>
<path d="M480.6 1354.5l-12.4-6v12z"/><rect x="481.4" y="1348.6" width="2.6" height="11.8"/>
</g>
<path d="M497.5 1342v29M571.5 1342v29M696.5 1342v29" stroke="#303030"/>
<path d="M498.5 1342v29M572.5 1342v29M697.5 1342v29" stroke="#525252"/>
<!-- center frame -->
<rect x="510.5" y="1352.5" width="17" height="5.2" fill="url(#g)"/>
<path d="M519 1347.5v15" stroke="#d4d4d4" stroke-width="1.5"/>
<path d="M513 1355.1h12" stroke="#464646" stroke-width="1.4"/>
<!-- loop -->
<path d="M541.2 1354v8h16.3v-4.5" fill="none" stroke="#d0d0d0" stroke-width="2.8"/>
<path d="M541 1357.5v-3.5h9v-4.5l7.5 5.5-7.5 5.5v-3.5h-5v.5z" fill="url(#g)"/>
<!-- onion skin -->
<rect x="590" y="1351.8" width="11" height="10.6" fill="url(#g)"/>
<path d="M586 1348h9.5v3.8h-5.5v5h-4z" fill="#9a9a9a"/>
<g fill="#3c3c3c"><rect x="587.5" y="1349" width="1.5" height="1.5"/><rect x="590.5" y="1349" width="1.5" height="1.5"/><rect x="593.5" y="1349" width="1.5" height="1.5"/><rect x="586" y="1350.5" width="1.5" height="1.5"/><rect x="589" y="1350.5" width="1.5" height="1.5"/><rect x="587.5" y="1352" width="1.5" height="1.5"/><rect x="586" y="1353.5" width="1.5" height="1.5"/><rect x="587.5" y="1355" width="1.5" height="1.5"/></g>
<!-- onion outlines -->
<rect x="613.5" y="1348.6" width="9" height="8.5" fill="none" stroke="#d0d0d0" stroke-width="1.7"/>
<rect x="618.8" y="1353.3" width="8.8" height="8.5" fill="#464646" stroke="#d0d0d0" stroke-width="1.7"/>
<!-- edit multiple frames -->
<rect x="640.5" y="1348.5" width="5.5" height="11.5" fill="#9a9a9a"/>
<rect x="646.5" y="1350.6" width="6" height="12.6" fill="url(#g)" stroke="#464646" stroke-width=".8"/>
<rect x="648.6" y="1359.3" width="2" height="2" fill="#333"/><rect x="642" y="1356.5" width="1.8" height="1.8" fill="#333"/>
<!-- modify markers -->
<path d="M669 1348.5h-3.2v12.5h3.2M678 1348.5h3.2v7" fill="none" stroke="#d0d0d0" stroke-width="1.7"/>
<circle cx="673" cy="1355.5" r="1.9" fill="#d0d0d0"/>
<path d="M675.3 1359.5h7.4l-3.7 4.3z" fill="#d0d0d0"/>
<!-- h scroll arrows -->
<path d="M887.5 1356l7-5.4v10.8z" fill="#c8c8c8"/>
<path d="M1866 1356l-7-5.4v10.8z" fill="#c8c8c8"/>
<!-- reset -->
<path d="M1893.2 1356.5a6 6 0 1 1 8 5.3" fill="none" stroke="#d2d2d2" stroke-width="3"/>
<path d="M1887.5 1355.4h10.5l-5.3 6.4z" fill="#d6d6d6"/>
<path d="M1889 1365.3h18.2" stroke="#dcdcdc" stroke-width="1.6"/>
<!-- mountains -->
<path d="M1923.7 1361l3.6-4.1 1.5 1.5 3-2.7 5.4 5.3z" fill="#c4c4c4"/>
<path d="M2104.4 1360.7l8.2-7 3.3 2.9 4.5-6 9.6 10.1z" fill="#8c8c8c" stroke="#d0d0d0" stroke-width=".9"/>
<!-- slider -->
<rect x="1955.5" y="1355.5" width="134.5" height="5" rx="1.5" fill="#2c2c2c" stroke="#161616"/>
<path d="M2048.5 1362v-8l5.3-6 5.3 6v8z" fill="#4e4e4e" stroke="#1c1c1c" stroke-width="1"/>
</svg>
<svg id="ov4" style="position:absolute;left:0;top:0;width:2160px;height:1440px" viewBox="0 0 2160 1440">
<!-- windows logo -->
<path d="M24 1401.4l10.2-1.5v9.7h-10.2zM35.6 1399.7l12.4-1.8v11.7h-12.4zM24 1411h10.2v9.7l-10.2-1.5zM35.6 1411h12.4v11.7l-12.4-1.8z" fill="#000"/>
<!-- search icon -->
<circle cx="104.8" cy="1406.8" r="7.6" fill="none" stroke="#1a1a1a" stroke-width="1.7"/>
<path d="M99.3 1412.3l-9 9" stroke="#1a1a1a" stroke-width="1.9"/>
<!-- cortana -->
<circle cx="624" cy="1410" r="9.6" fill="none" stroke="#111" stroke-width="3.3"/>
<!-- task view -->
<g fill="none" stroke="#111" stroke-width="1.3">
<rect x="684.4" y="1404.6" width="15" height="9.8"/>
<path d="M684.4 1398v3.4h15v-3.4M684.4 1420.8v-3.4h15v3.4M706.4 1398v5.6M706.4 1409.2v11.6"/>
</g>
<rect x="704.9" y="1405.1" width="3" height="3" fill="#111"/>
<!-- chrome -->
<g>
<circle cx="772.6" cy="1409.8" r="16.6" fill="#fff"/>
<path d="M772.6 1409.8L758.220 1401.5A16.6 16.6 0 0 1 786.980 1401.5z" fill="#ea4335"/>
<path d="M772.6 1393.2A16.6 16.6 0 0 1 786.980 1401.5L772.6 1401.5z" fill="#ea4335"/>
<path d="M758.220 1401.5A16.6 16.6 0 0 0 772.6 1426.4L779.8 1414z" fill="#34a853"/>
<path d="M786.980 1401.5A16.6 16.6 0 0 1 772.6 1426.4L779.8 1414 772.6 1401.5z" fill="#fbbc05"/>
<path d="M758.220 1401.5L772.6 1409.8 765.4 1414z" fill="#34a853"/>
<circle cx="772.6" cy="1409.8" r="8.3" fill="#fff"/>
<circle cx="772.6" cy="1409.8" r="6.6" fill="#4285f4"/>
</g>
<!-- WPS -->
<path d="M830.2 1398.8q-.2-1.5 1.3-1.5h14.1q1.8.3 1 2.3l-2.8 6-1-3.1h-6l5.6 11.1-3.4 7.9z" fill="#f21a16"/>
<path d="M856.6 1397.3h8q2 .3 1.2 2.3l-10.8 23.4h-5l-.8-6 2.2-5 .6 2 7-11.5h-4.8z" fill="#f0201a"/>
<path d="M850.8 1397.3h5.8l-12 25.7q-1.1 1.3-3.1 1l-1.5-.5q-1.2-.7-1-2z" fill="#ff5a1e"/>
<rect x="851" y="1412.5" width="13" height="14" rx="3.2" fill="#2f5fae"/>
<rect x="852" y="1414.3" width="13.2" height="13.5" rx="3" fill="#6aa2ff"/>
<path d="M854.3 1418.9l.7 5.8 3.1-3.1 3.2 3.1.5-5.8" fill="none" stroke="#fff" stroke-width="1.4" stroke-linejoin="round"/>
<!-- An icon -->
<rect x="907" y="1394" width="31.5" height="30" fill="#2a0600" stroke="#fa4a1e" stroke-width="2.2"/>
<text x="913" y="1416.5" font-family="Liberation Sans, sans-serif" font-size="21" font-weight="bold" fill="#fa4a1e" textLength="20.5" lengthAdjust="spacingAndGlyphs">An</text>
<!-- tray -->
<path d="M1653 1414.3l9-9.6 9 9.6" fill="none" stroke="#111" stroke-width="1.5"/>
<g stroke="#111" stroke-width="3.8" stroke-linecap="round"><path d="M1689.5 1405h16.5M1689.5 1415h16.5"/></g>
<g stroke="#111" stroke-width="4.2" stroke-linecap="round"><path d="M1701.4 1402.5v5M1693 1412.5v5"/></g>
<path d="M1722.3 1401.5l23.2-3v14M1722.3 1401.5v17.2l14 1.6" fill="none" stroke="#111" stroke-width="1.3"/>
<path d="M1728.5 1408.5a4.6 4.6 0 0 1 8.5-1.5M1737.5 1411.5a4.6 4.6 0 0 1-8.5 1.5" fill="none" stroke="#111" stroke-width="1.2"/>
<path d="M1737.3 1404.5v3h-3M1728.7 1415.5v-3h3" fill="none" stroke="#111" stroke-width="1.2"/>
<circle cx="1740.5" cy="1416.3" r="5.6" fill="#2f72c0"/>
<rect x="1763" y="1404.5" width="17.5" height="11.5" fill="none" stroke="#111" stroke-width="1.3"/>
<rect x="1765.5" y="1406.5" width="13.8" height="7.6" fill="#000"/>
<rect x="1780.5" y="1408" width="1.6" height="4.5" fill="#111"/>
<path d="M1759.5 1401v4M1763 1401v4M1758.3 1405h6v3.5q0 2.5-3 2.5t-3-2.5zM1761.3 1411v5.5h2" fill="none" stroke="#111" stroke-width="1.2"/>
<g fill="none" stroke="#111" stroke-width="1.4"><path d="M1798.5 1419.5a17 17 0 0 1 17-17M1804 1419.5a11.5 11.5 0 0 1 11.5-11.5M1809.5 1419.5a6 6 0 0 1 6-6"/></g>
<circle cx="1814.5" cy="1418.3" r="1.5" fill="#111"/>
<path d="M1831.3 1406.3h3.7l5-5v17.5l-5-5h-3.7z" fill="none" stroke="#111" stroke-width="1.3"/>
<path d="M1843 1407a4.5 4.5 0 0 1 0 6M1846 1404a8.5 8.5 0 0 1 0 12M1849.2 1401.3a12.5 12.5 0 0 1 0 17.4" fill="none" stroke="#111" stroke-width="1.2"/>
<!-- IMI -->
<path d="M2029 1395.2l4.6 5v20h-4.6zM2060 1395.2l-4.6 5v20h4.6zM2036 1402.3l8 10 8-10v18h-4v-9l-4 5-4-5v9h-4z" fill="#111"/>
<!-- notification -->
<path d="M2098 1398h24v18.7h-12.5l-4.5 4.8v-4.8h-7z" fill="#000"/>
<path d="M2103 1403.5h14M2103 1407.5h14M2103 1411.5h9" stroke="#e8dcd6" stroke-width="1.1"/>
<circle cx="2121.5" cy="1421" r="11.8" fill="#d8d6d4" stroke="#8a8a8a" stroke-width="1"/>
<text x="2116.3" y="1427.5" font-family="Liberation Sans, sans-serif" font-size="17" font-weight="bold" fill="#111">3</text>
</svg>
</body></html>
